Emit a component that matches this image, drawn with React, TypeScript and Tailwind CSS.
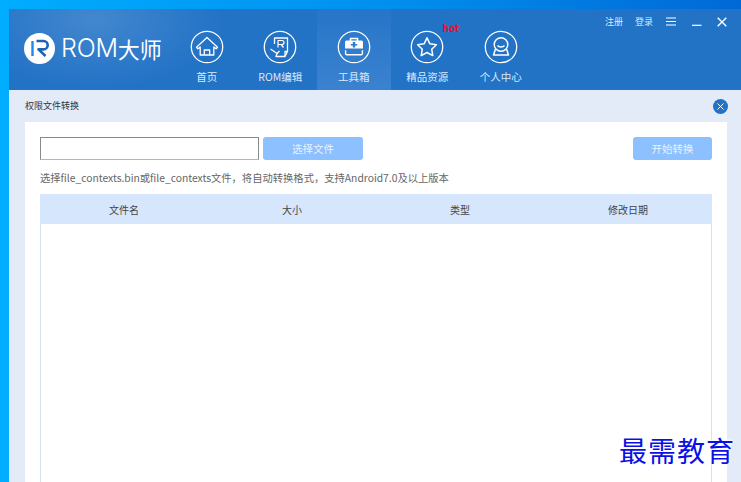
const FONT = "font-['Noto_Sans_CJK_SC','Noto_Sans',sans-serif]";

function HomeIcon() {
  return (
    <svg viewBox="0 0 34 34" className="h-[34px] w-[34px]" fill="none" stroke="#fff" strokeWidth="1.3" strokeLinejoin="round">
      <circle cx="17" cy="17" r="15.7" />
      <path d="M17 7.5 6.5 17.2l1.4 1.6 2.3-1.8V25h13.6v-8l2.3 1.8 1.4-1.6z" />
      <path d="M14.3 25v-5h5.4v5" />
    </svg>
  );
}

function EditIcon() {
  return (
    <svg viewBox="0 0 34 34" className="h-[34px] w-[34px]" fill="none" stroke="#fff" strokeWidth="1.3" strokeLinejoin="round">
      <circle cx="17" cy="17" r="15.7" />
      <path d="M11.5 14V8h13v13.5l-2.5 5h-9l1-3" />
      <path d="M7.5 19l6.5 4.5 2.5-2.5M22 26.5v-5h2.5" />
      <path d="M15 17.5v-7h4a2 2 0 0 1 0 4h-4m3 0 2.5 3" strokeWidth="1.2" />
    </svg>
  );
}

function ToolboxIcon() {
  return (
    <svg viewBox="0 0 34 34" className="h-[34px] w-[34px]" fill="none" stroke="#fff" strokeWidth="1.3">
      <circle cx="17" cy="17" r="15.7" />
      <path d="M13.5 11V8.5h7V11" strokeWidth="1.6" />
      <path fill="#fff" stroke="none" fillRule="evenodd" d="M9.5 10.5h15a1.5 1.5 0 0 1 1.5 1.5v6.5H8V12a1.5 1.5 0 0 1 1.5-1.5zM15.8 12v2h-2v1.6h2v2h2.4v-2h2v-1.6h-2v-2z" />
      <path d="M8.6 20.2v3.3a1.2 1.2 0 0 0 1.2 1.2h14.4a1.2 1.2 0 0 0 1.2-1.2v-3.3" strokeWidth="1.4" />
    </svg>
  );
}

function StarIcon() {
  return (
    <svg viewBox="0 0 34 34" className="h-[34px] w-[34px]" fill="none" stroke="#fff" strokeWidth="1.3" strokeLinejoin="round">
      <circle cx="17" cy="17" r="15.7" />
      <path d="m17 7.8 2.9 6 6.5.9-4.7 4.5 1.1 6.4-5.8-3.1-5.8 3.1 1.1-6.4-4.7-4.5 6.5-.9z" strokeWidth="1.5" />
    </svg>
  );
}

function UserIcon() {
  return (
    <svg viewBox="0 0 34 34" className="h-[34px] w-[34px]" fill="none" stroke="#fff" strokeWidth="1.3" strokeLinejoin="round">
      <circle cx="17" cy="17" r="15.7" />
      <circle cx="17" cy="14.5" r="6.8" strokeWidth="1.5" />
      <path d="M13.5 15.5c1.5 2 5.5 2 7 0" />
      <path d="M11.5 19 9.5 25h15l-2-6" strokeWidth="1.5" />
    </svg>
  );
}

const NAV = [
  { label: "首页", icon: <HomeIcon /> },
  { label: "ROM编辑", icon: <EditIcon /> },
  { label: "工具箱", icon: <ToolboxIcon />, active: true },
  { label: "精品资源", icon: <StarIcon />, hot: true },
  { label: "个人中心", icon: <UserIcon /> },
];

function NavItem({ label, icon, active, hot }: { label: string; icon: React.ReactNode; active?: boolean; hot?: boolean }) {
  return (
    <div className={`relative flex w-[73.5px] flex-col items-center pt-[21px] ${active ? "bg-gradient-to-b from-[#2675c8] to-[#3b82d0]" : ""}`}>
      {icon}
      {hot && <span className="absolute left-[52px] top-[12px] text-[10px] font-bold leading-[14px] text-[#e8102a]">hot</span>}
      <span className="mt-[6px] text-[10.5px] leading-[14px] text-[#dbe9f8]">{label}</span>
    </div>
  );
}

function Logo() {
  return (
    <div className="flex items-center pl-[15px] pt-[24px]">
      <svg viewBox="0 0 31 31" className="h-[31px] w-[31px]" fill="none">
        <circle cx="15.5" cy="15.5" r="15.5" fill="#fff" />
        <path d="M8.5 8v15" stroke="#1f86ee" strokeWidth="2.4" />
        <path d="M12.5 8h7a4.2 4.2 0 0 1 0 8.4h-5l7 6.6" stroke="#1b63b8" strokeWidth="2.6" strokeLinejoin="round" />
      </svg>
      <span className="ml-[6px] font-['Inter',sans-serif] text-[25px] font-light leading-[31px] tracking-[-0.2px] text-white">ROM</span>
      <span className="text-[22px] font-normal leading-[31px] text-white">大师</span>
    </div>
  );
}

function WindowControls() {
  return (
    <div className="absolute right-[14px] top-[6px] flex items-center text-[9px] leading-[13px] text-[#dbe9f8]">
      <span>注册</span>
      <span className="ml-[12px]">登录</span>
      <svg viewBox="0 0 10 9" className="ml-[13px] h-[9px] w-[10px]" stroke="#fff" strokeWidth="1.2">
        <path d="M0 1h10M0 4.5h10M0 8h10" />
      </svg>
      <svg viewBox="0 0 10 9" className="ml-[16px] h-[9px] w-[10px]" stroke="#fff" strokeWidth="1.2">
        <path d="M0 8.3h9.5" />
      </svg>
      <svg viewBox="0 0 10 10" className="ml-[15px] h-[10px] w-[10px]" stroke="#fff" strokeWidth="1.4">
        <path d="m.7.7 8.6 8.6M9.3.7.7 9.3" />
      </svg>
    </div>
  );
}

export default function App() {
  return (
    <div className={`relative h-[482px] w-[741px] overflow-hidden bg-gradient-to-r from-[#00adff] via-[#0091ee] to-[#0069d6] pl-[9px] pt-[9px] ${FONT}`}>
      <div className="flex h-[473px] flex-col bg-[#e3eaf8]">
        <header className="relative flex h-[81px] shrink-0 bg-[#2272c6] bg-[radial-gradient(ellipse_130px_70px_at_85px_10px,#4387cf,#2272c6)]">
          <div className="w-[161px] shrink-0">
            <Logo />
          </div>
          <nav className="flex">
            {NAV.map((item) => (
              <NavItem key={item.label} {...item} />
            ))}
          </nav>
          <WindowControls />
        </header>

        <div className="flex h-[32px] shrink-0 items-center justify-between pl-[16px] pr-[13px]">
          <span className="text-[9px] text-[#333]">权限文件转换</span>
          <span className="flex h-[15px] w-[15px] items-center justify-center rounded-full bg-[#2272c6]">
            <svg viewBox="0 0 7 7" className="h-[7px] w-[7px]" stroke="#fff" strokeWidth="1">
              <path d="m.5.5 6 6M6.5.5l-6 6" />
            </svg>
          </span>
        </div>

        <main className="ml-[16px] mr-[14px] flex flex-1 flex-col bg-white px-[15px] pt-[15px]">
          <div className="flex h-[23px] shrink-0">
            <div className="w-[219px] border border-[#8a8a8a] border-b-[#b5b5b5] bg-white" />
            <button className="ml-[4px] w-[100px] rounded-[3px] bg-[#8cc0ff] text-[10.5px] text-[#e8f2ff]">选择文件</button>
            <button className="ml-auto w-[79px] rounded-[3px] bg-[#8cc0ff] text-[10.5px] text-[#e8f2ff]">开始转换</button>
          </div>
          <p className="mt-[11px] h-[14px] text-[10.3px] leading-[14px] text-[#666]">
            选择file_contexts.bin或file_contexts文件，将自动转换格式，支持Android7.0及以上版本
          </p>
          <div className="mt-[9px] flex-1 border-x border-[#d8e0ef]">
            <div className="-mx-px grid h-[30px] grid-cols-4 items-center bg-[#d6e6fd] text-center text-[10px] text-[#444]">
              <span>文件名</span>
              <span>大小</span>
              <span>类型</span>
              <span>修改日期</span>
            </div>
          </div>
        </main>
      </div>

      <span className="absolute left-[619px] top-[432px] text-[28px] leading-[36px] tracking-[1px] text-[#0a10e6] [text-shadow:0_0_3px_#fff,0_0_3px_#fff,0_0_3px_#fff]">
        最需教育
      </span>
    </div>
  );
}
